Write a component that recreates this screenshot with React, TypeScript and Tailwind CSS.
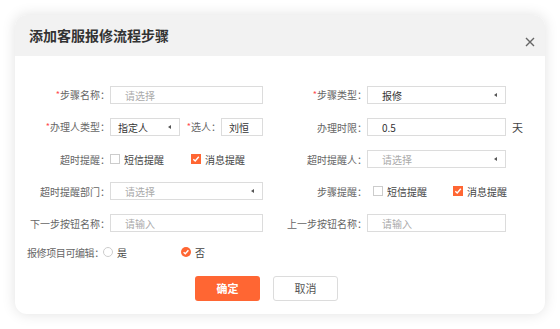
import React from "react";

function Label({ text, required, w }: { text: string; required?: boolean; w: string }) {
  return (
    <div className={`${w} shrink-0 text-right text-[10px] text-[#666] whitespace-nowrap`}>
      {required && <span className="text-[#ff4d4f] text-[9px] relative -top-[1px]">*</span>}
      {text}：
    </div>
  );
}

function Field({ w, value, placeholder, pad = "pl-[14px]", select }: { w: string; value?: string; placeholder?: string; pad?: string; select?: boolean }) {
  return (
    <div className={`${w} h-[18px] shrink-0 border border-[#dcdcdc] bg-white ${pad} pr-[8px] flex items-center justify-between text-[10px]`}>
      {value ? <span className="text-[#333]">{value}</span> : <span className="text-[#aaa]">{placeholder}</span>}
      {select && <span className="w-0 h-0 border-y-[2.5px] border-y-transparent border-r-[3px] border-r-[#555]" />}
    </div>
  );
}

function Check({ checked, text }: { checked?: boolean; text: string }) {
  return (
    <div className="flex items-center gap-[4px] text-[10px] text-[#444] whitespace-nowrap shrink-0">
      {checked ? (
        <span className="w-[10px] h-[10px] bg-[#ff6633] flex items-center justify-center">
          <svg width="8" height="8" viewBox="0 0 8 8"><path d="M1.3 4.2 L3.2 6 L6.8 1.8" stroke="#fff" strokeWidth="1.4" fill="none" /></svg>
        </span>
      ) : (
        <span className="w-[10px] h-[10px] border border-[#ccc] bg-white" />
      )}
      <span>{text}</span>
    </div>
  );
}

function Radio({ checked, text }: { checked?: boolean; text: string }) {
  return (
    <div className="flex items-center gap-[4px] text-[10px] text-[#444] whitespace-nowrap">
      {checked ? (
        <span className="w-[10px] h-[10px] rounded-full bg-[#ff6633] flex items-center justify-center">
          <svg width="8" height="8" viewBox="0 0 8 8"><path d="M1.6 4.2 L3.3 5.8 L6.4 2.2" stroke="#fff" strokeWidth="1.4" fill="none" /></svg>
        </span>
      ) : (
        <span className="w-[10px] h-[10px] rounded-full border border-[#ccc] bg-white" />
      )}
      <span>{text}</span>
    </div>
  );
}

export default function App() {
  return (
    <div className="w-[560px] h-[329px] bg-white p-[15px] font-['Noto_Sans_CJK_SC','Liberation_Sans',sans-serif]">
      <div className="w-[530px] rounded-[12px] bg-white shadow-[0_0_14px_rgba(0,0,0,0.12)] overflow-hidden">
        {/* Header */}
        <div className="h-[41px] bg-[#f2f2f2] flex items-center justify-between pl-[14px] pr-[10px]">
          <h2 className="text-[14px] font-bold text-[#333]">添加客服报修流程步骤</h2>
          <svg width="10" height="10" viewBox="0 0 10 10" className="mt-[12px]">
            <path d="M1 1 L9 9 M9 1 L1 9" stroke="#666" strokeWidth="1.4" />
          </svg>
        </div>

        {/* Body */}
        <div className="pt-[30px] pb-[13px]">
          <div className="flex h-[18px] items-center">
            <Label w="w-[95px]" text="步骤名称" required />
            <Field w="w-[153px]" placeholder="请选择" />
            <Label w="w-[104px]" text="步骤类型" required />
            <Field w="w-[139px]" value="报修" select />
          </div>

          <div className="flex h-[18px] items-center mt-[14px]">
            <Label w="w-[95px]" text="办理人类型" required />
            <Field w="w-[70px]" value="指定人" pad="pl-[7px]" select />
            <Label w="w-[41px]" text="选人" required />
            <Field w="w-[42px]" value="刘恒" pad="pl-[7px]" />
            <Label w="w-[104px]" text="办理时限" />
            <Field w="w-[139px]" value="0.5" />
            <span className="ml-[6px] text-[11px] text-[#444]">天</span>
          </div>

          <div className="flex h-[18px] items-center mt-[14px]">
            <Label w="w-[95px]" text="超时提醒" />
            <div className="w-[153px] flex items-center gap-[27px]">
              <Check text="短信提醒" />
              <Check checked text="消息提醒" />
            </div>
            <Label w="w-[104px]" text="超时提醒人" />
            <Field w="w-[139px]" placeholder="请选择" select />
          </div>

          <div className="flex h-[18px] items-center mt-[14px]">
            <Label w="w-[95px]" text="超时提醒部门" />
            <Field w="w-[153px]" placeholder="请选择" select />
            <Label w="w-[104px]" text="步骤提醒" />
            <div className="pl-[6px] flex items-center gap-[26px]">
              <Check text="短信提醒" />
              <Check checked text="消息提醒" />
            </div>
          </div>

          <div className="flex h-[18px] items-center mt-[14px]">
            <Label w="w-[95px]" text="下一步按钮名称" />
            <Field w="w-[153px]" placeholder="请输入" />
            <Label w="w-[104px]" text="上一步按钮名称" />
            <Field w="w-[139px]" placeholder="请输入" />
          </div>

          <div className="flex h-[18px] items-center mt-[11px]">
            <div className="w-[88px] pl-[12px] shrink-0 text-[10px] text-[#666] whitespace-nowrap tracking-[-0.4px]">报修项目可编辑：</div>
            <div className="flex items-center gap-[54px]">
              <Radio text="是" />
              <Radio checked text="否" />
            </div>
          </div>

          <div className="flex justify-center gap-[13px] mt-[15px] pr-[27px]">
            <button className="w-[65px] h-[25px] rounded-[3px] bg-[#ff6633] text-white text-[11px] font-bold">确定</button>
            <button className="w-[65px] h-[25px] rounded-[3px] border border-[#dcdcdc] bg-white text-[#555] text-[11px]">取消</button>
          </div>
        </div>
      </div>
    </div>
  );
}
